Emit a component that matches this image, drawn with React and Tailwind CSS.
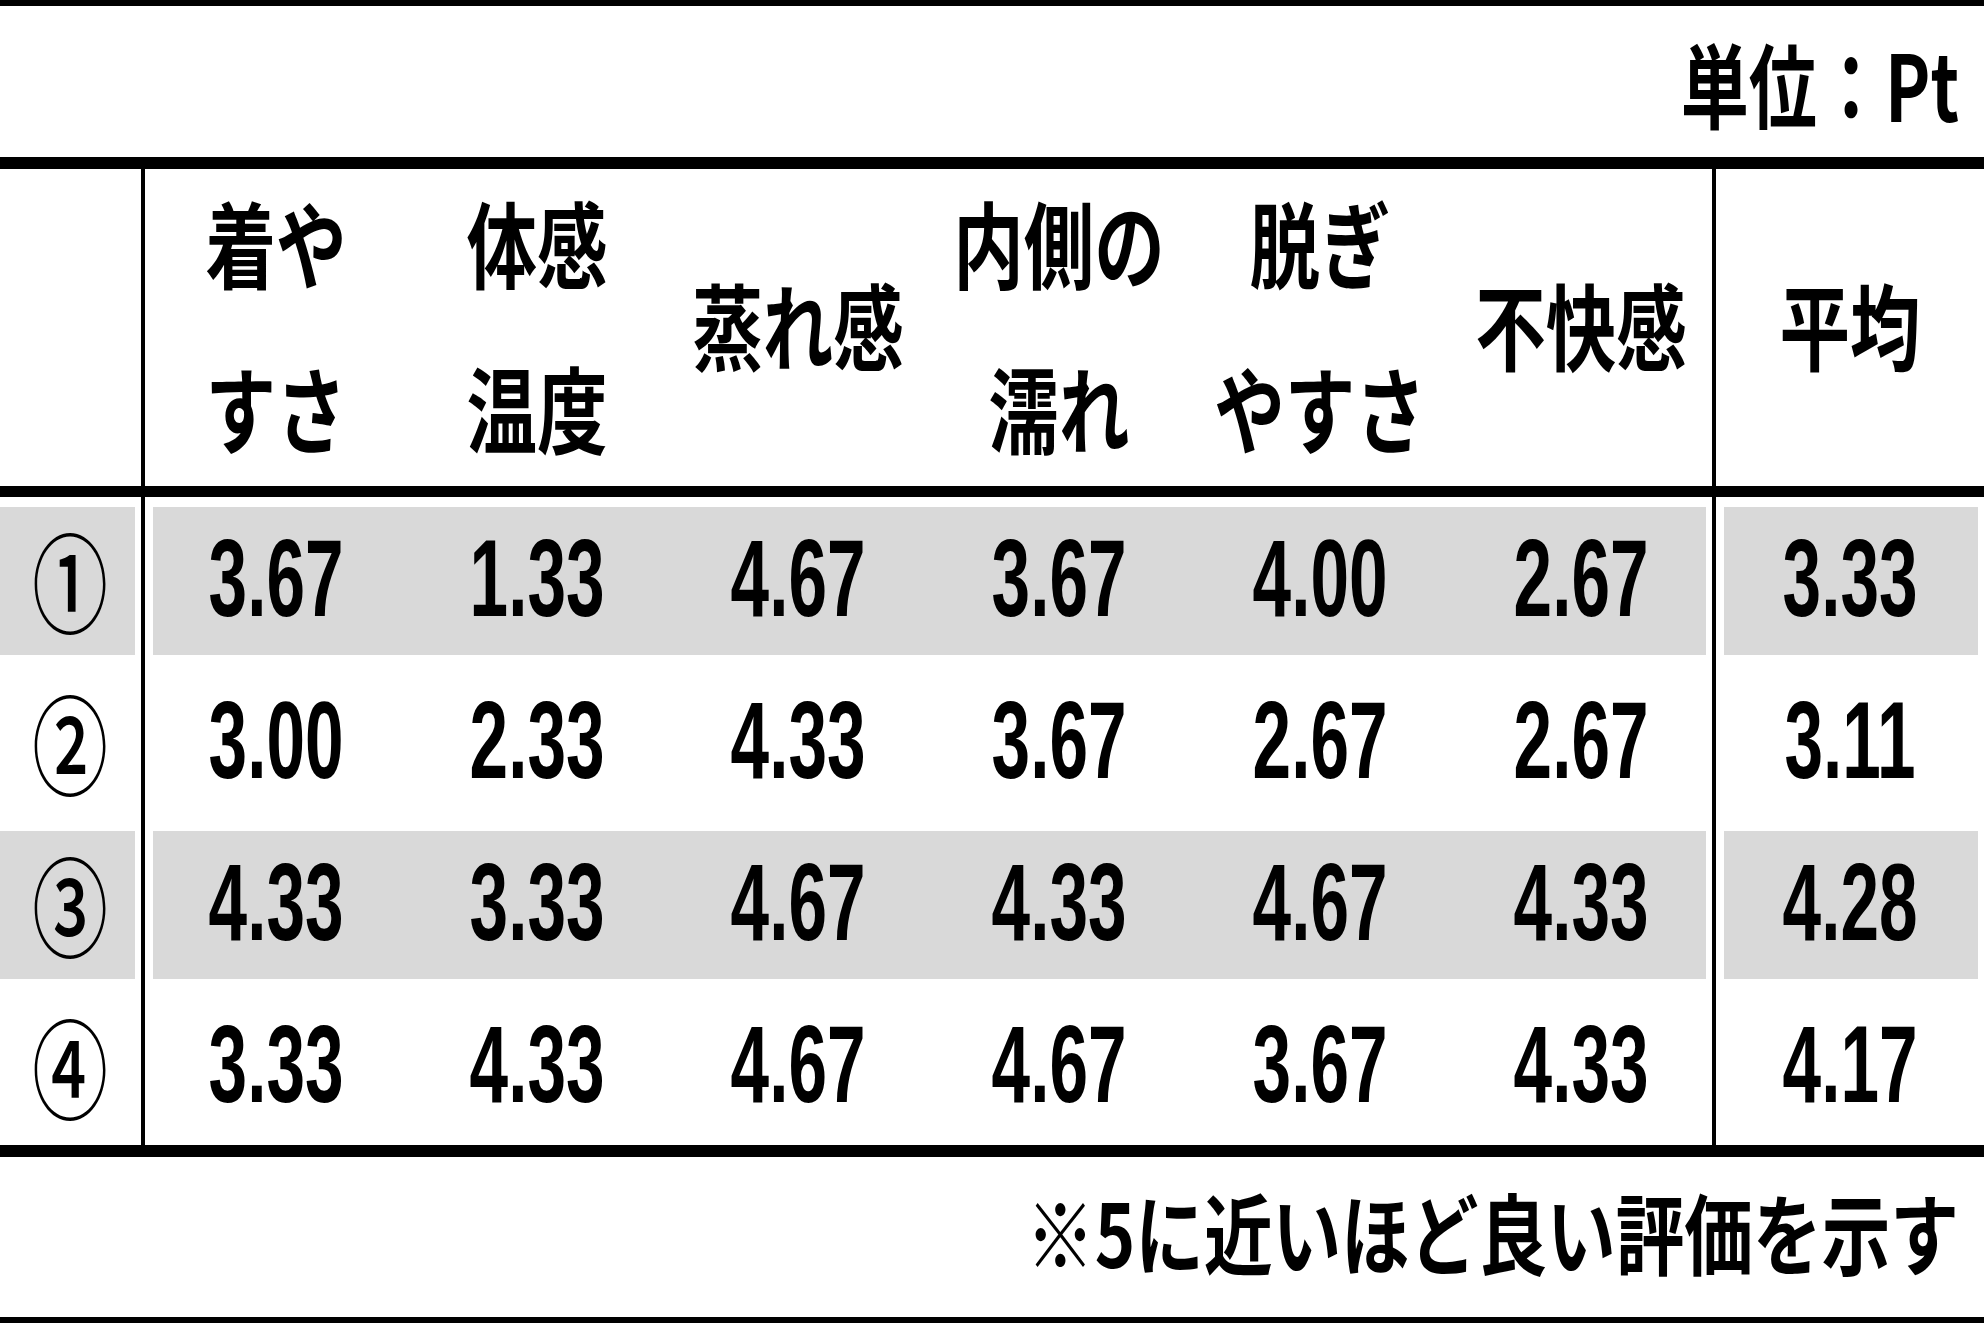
const headers = [
  ["着や", "すさ"],
  ["体感", "温度"],
  ["蒸れ感"],
  ["内側の", "濡れ"],
  ["脱ぎ", "やすさ"],
  ["不快感"],
];

const rows = [
  { no: "①", vals: ["3.67", "1.33", "4.67", "3.67", "4.00", "2.67"], avg: "3.33", shade: true },
  { no: "②", vals: ["3.00", "2.33", "4.33", "3.67", "2.67", "2.67"], avg: "3.11" },
  { no: "③", vals: ["4.33", "3.33", "4.67", "4.33", "4.67", "4.33"], avg: "4.28", shade: true },
  { no: "④", vals: ["3.33", "4.33", "4.67", "4.67", "3.67", "4.33"], avg: "4.17" },
];

const jp = "font-['Noto_Sans_CJK_JP',sans-serif] font-bold";
const num = "font-['Liberation_Sans',Arial,sans-serif] font-bold";

function Label({ lines }) {
  return (
    <div className="flex flex-col items-center justify-center h-full pb-[8px]">
      {lines.map((l) => (
        <span key={l} className={`${jp} inline-block scale-x-[0.75] text-[94px] leading-[165px] whitespace-nowrap`}>
          {l}
        </span>
      ))}
    </div>
  );
}

function Num({ v }) {
  return (
    <div className="flex items-center justify-center h-full">
      <span className={`${num} inline-block scale-x-[0.63] text-[110px] leading-none`}>{v}</span>
    </div>
  );
}

export default function App() {
  return (
    <div className="w-[1984px] h-[1323px] bg-white text-black flex flex-col overflow-hidden">
      <div className="h-[6px] bg-black" />
      <div className="h-[151px] flex items-center justify-end pr-[25px]">
        <span className={`${jp} inline-block origin-right scale-x-[0.74] text-[92px] leading-none whitespace-nowrap`}>
          単位：Pt
        </span>
      </div>
      <div className="h-[12px] bg-black" />

      {/* header */}
      <div className="h-[317px] flex">
        <div className="w-[141px]" />
        <div className="w-[4px] bg-black" />
        <div className="w-[1567px] grid grid-cols-6 grid-rows-[317px]">
          {headers.map((h, i) => (
            <Label key={i} lines={h} />
          ))}
        </div>
        <div className="w-[4px] bg-black" />
        <div className="flex-1">
          <Label lines={["平均"]} />
        </div>
      </div>
      <div className="h-[11px] bg-black" />

      {rows.map((r) => (
        <div key={r.no} className="h-[162px] flex">
          <div
            className={`w-[141px] flex items-center justify-center ${
              r.shade ? "bg-[#d9d9d9] shadow-[inset_0_10px_0_#fff,inset_0_-4px_0_#fff,inset_-6px_0_0_#fff]" : ""
            }`}
          >
            <span className="font-['Noto_Sans_CJK_JP',sans-serif] font-medium inline-block scale-x-[0.7] text-[108px] leading-none">
              {r.no}
            </span>
          </div>
          <div className="w-[4px] bg-black" />
          <div
            className={`w-[1567px] grid grid-cols-6 ${
              r.shade
                ? "bg-[#d9d9d9] shadow-[inset_0_10px_0_#fff,inset_0_-4px_0_#fff,inset_8px_0_0_#fff,inset_-6px_0_0_#fff]"
                : ""
            }`}
          >
            {r.vals.map((v, i) => (
              <Num key={i} v={v} />
            ))}
          </div>
          <div className="w-[4px] bg-black" />
          <div
            className={`flex-1 ${
              r.shade
                ? "bg-[#d9d9d9] shadow-[inset_0_10px_0_#fff,inset_0_-4px_0_#fff,inset_8px_0_0_#fff,inset_-6px_0_0_#fff]"
                : ""
            }`}
          >
            <Num v={r.avg} />
          </div>
        </div>
      ))}

      <div className="h-[12px] bg-black" />
      <div className="flex-1 flex items-center justify-end pr-[25px] pb-[14px]">
        <span className={`${jp} inline-block origin-right scale-x-[0.78] text-[88px] leading-none whitespace-nowrap`}>
          ※5に近いほど良い評価を示す
        </span>
      </div>
      <div className="h-[6px] bg-black" />
    </div>
  );
}
